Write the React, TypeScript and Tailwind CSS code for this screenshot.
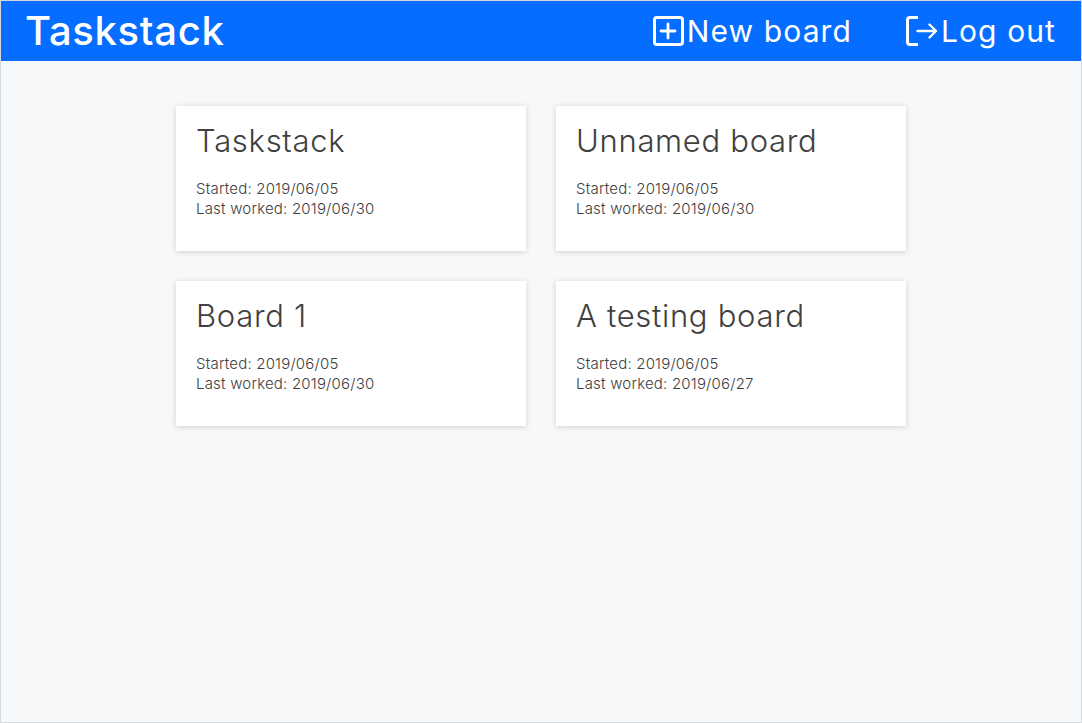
import { Plus } from 'lucide-react';

const boards = [
  { name: 'Taskstack', started: '2019/06/05', worked: '2019/06/30' },
  { name: 'Unnamed board', started: '2019/06/05', worked: '2019/06/30' },
  { name: 'Board 1', started: '2019/06/05', worked: '2019/06/30' },
  { name: 'A testing board', started: '2019/06/05', worked: '2019/06/27' },
];

export default function App() {
  return (
    <div className="h-[723px] w-[1082px] border border-[#d5d8dc] bg-[#f7f8fa] font-['Inter','Liberation_Sans',sans-serif]">
      {/* Header */}
      <header className="flex h-[60px] items-center justify-between bg-[#056dff] pl-6 pr-[25px] text-white">
        <h1 className="text-[40px] font-medium leading-none tracking-[0.7px]">Taskstack</h1>
        <nav className="flex items-center gap-[54px] text-[30px] leading-none tracking-[1.1px]">
          <a className="flex items-center gap-[3px]">
            <span className="flex h-[30px] w-[31px] shrink-0 items-center justify-center rounded-[4px] border-[3px] border-white">
              <Plus size={24} strokeWidth={2.8} className="shrink-0" />
            </span>
            New board
          </a>
          <a className="flex items-center gap-[3px]">
            <span className="relative flex h-[30px] w-[32px] shrink-0 items-center justify-end">
              <span className="absolute left-0 top-0 h-[30px] w-[12px] rounded-l-[4px] border-y-[3px] border-l-[3px] border-white" />
              <svg width="22" height="16" viewBox="0 0 22 16" fill="none" stroke="currentColor" strokeWidth="2.4" strokeLinecap="round" strokeLinejoin="round">
                <path d="M1.5 8H20M13.5 1.5 20 8l-6.5 6.5" />
              </svg>
            </span>
            Log out
          </a>
        </nav>
      </header>

      {/* Boards */}
      <main className="mx-auto grid w-[730px] grid-cols-2 gap-[30px] pt-[45px]">
        {boards.map((board) => (
          <div key={board.name} className="h-[145px] bg-white px-5 pt-4 text-[#404040] shadow-[0_1px_6px_rgba(0,0,0,0.16)]">
            <h2 className="text-[31px] font-light leading-[38px] tracking-[0.7px]">{board.name}</h2>
            <p className="mt-[19px] text-[15px] font-light leading-5 tracking-[0.2px]">
              Started: {board.started}
              <br />
              Last worked: {board.worked}
            </p>
          </div>
        ))}
      </main>
    </div>
  );
}
